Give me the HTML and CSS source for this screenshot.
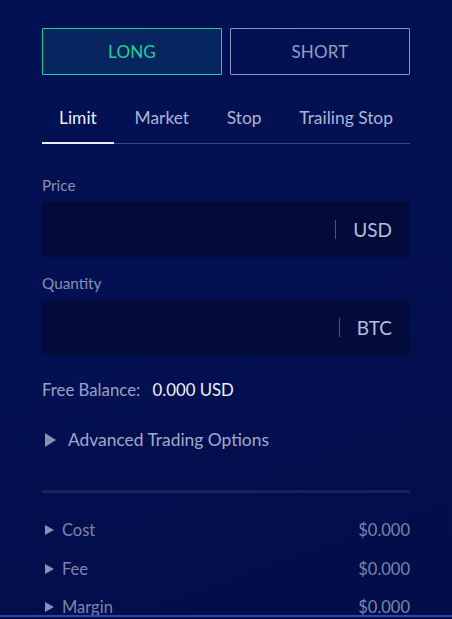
FILE: index.html
```html
<!DOCTYPE html>
<html lang="en">
  <head>
    <meta charset="UTF-8" />
    <title>Order</title>
    <link rel="stylesheet" href="styles.css">
  </head>
  <body>
    <div class="panel">
      <div class="side-toggle">
        <button class="side long active">LONG</button>
        <button class="side short">SHORT</button>
      </div>

      <div class="tabs">
        <span class="tab active">Limit</span>
        <span class="tab">Market</span>
        <span class="tab">Stop</span>
        <span class="tab">Trailing Stop</span>
      </div>

      <label class="field-label">Price</label>
      <div class="field">
        <span class="field-value"></span>
        <span class="field-unit">USD</span>
      </div>

      <label class="field-label">Quantity</label>
      <div class="field">
        <span class="field-value"></span>
        <span class="field-unit">BTC</span>
      </div>

      <div class="balance">
        <span class="balance-label">Free Balance:</span>
        <span class="balance-value">0.000 USD</span>
      </div>

      <div class="advanced">
        <span class="caret big"></span>
        <span>Advanced Trading Options</span>
      </div>

      <div class="divider"></div>

      <div class="summary">
        <div class="summary-row">
          <span class="summary-name"><span class="caret"></span>Cost</span>
          <span class="summary-value">$0.000</span>
        </div>
        <div class="summary-row">
          <span class="summary-name"><span class="caret"></span>Fee</span>
          <span class="summary-value">$0.000</span>
        </div>
        <div class="summary-row">
          <span class="summary-name"><span class="caret"></span>Margin</span>
          <span class="summary-value">$0.000</span>
        </div>
      </div>
    </div>
    <div class="footer-bar"></div>
  </body>
</html>
```

FILE: styles.css
```css
* {
  box-sizing: border-box;
}
body {
  margin: 0;
  height: 619px;
  overflow: hidden;
  font-family: Lato, "Noto Sans", sans-serif;
  background: linear-gradient(160deg, #021153 0%, #031052 50%, #020d48 100%);
  color: #9aa2c6;
}
.panel {
  padding: 28px 42px 0;
}

/* long / short */
.side-toggle {
  display: grid;
  grid-template-columns: 1fr 1fr;
  gap: 8px;
}
.side {
  height: 47px;
  background: transparent;
  font-family: inherit;
  font-size: 17px;
  letter-spacing: 0.2px;
  border: 1px solid #8c95bf;
  color: #959dc2;
  border-radius: 1px;
}
.side.long.active {
  border-color: #1fcf9b;
  background: #07255e;
  color: #1fcf9b;
}

/* order type tabs */
.tabs {
  display: flex;
  justify-content: space-between;
  margin-top: 26px;
  border-bottom: 1px solid #3b4783;
}
.tab {
  padding: 6px 17px 14px;
  font-size: 17.4px;
  color: #aeb5d6;
  border-bottom: 2px solid transparent;
  margin-bottom: -1px;
}
.tab.active {
  color: #e9edf7;
  border-bottom-color: #e9edf7;
}

/* inputs */
.field-label {
  display: block;
  margin-top: 32px;
  font-size: 15.3px;
  color: #8890b6;
}
.field-label + .field {
  margin-top: 8px;
}
.field {
  display: flex;
  align-items: center;
  height: 55px;
  background: #030b3b;
  padding-right: 18px;
}
.field + .field-label {
  margin-top: 17px;
}
.field-value {
  flex: 1;
}
.field-unit {
  font-size: 19px;
  color: #b7bfdc;
  border-left: 1px solid #4a5584;
  padding-left: 17px;
  line-height: 19px;
}

.balance {
  margin-top: 24px;
  font-size: 16.8px;
}
.balance-label {
  color: #9aa2c6;
  margin-right: 8px;
}
.balance-value {
  color: #eef1f9;
}

.advanced {
  display: flex;
  align-items: center;
  gap: 12px;
  margin-top: 29px;
  padding-left: 3px;
  font-size: 17.4px;
  color: #a1a9cc;
}
.caret {
  display: inline-block;
  width: 0;
  height: 0;
  border-top: 5px solid transparent;
  border-bottom: 5px solid transparent;
  border-left: 9px solid #8990b3;
  margin-right: 8px;
}
.caret.big {
  border-top-width: 7px;
  border-bottom-width: 7px;
  border-left-width: 11px;
  margin-right: 0;
}

.divider {
  margin-top: 40px;
  height: 3px;
  background: #16225a;
}

.summary {
  margin-top: 18px;
}
.summary-row {
  display: flex;
  justify-content: space-between;
  align-items: center;
  height: 38.5px;
  font-size: 16.5px;
  color: #7c84ab;
}
.summary-name {
  display: flex;
  align-items: center;
  padding-left: 3px;
}

.footer-bar {
  position: absolute;
  left: 0;
  right: 0;
  top: 615px;
  height: 4px;
  border-top: 2px solid #1d48b8;
  background: #020c44;
}
```
